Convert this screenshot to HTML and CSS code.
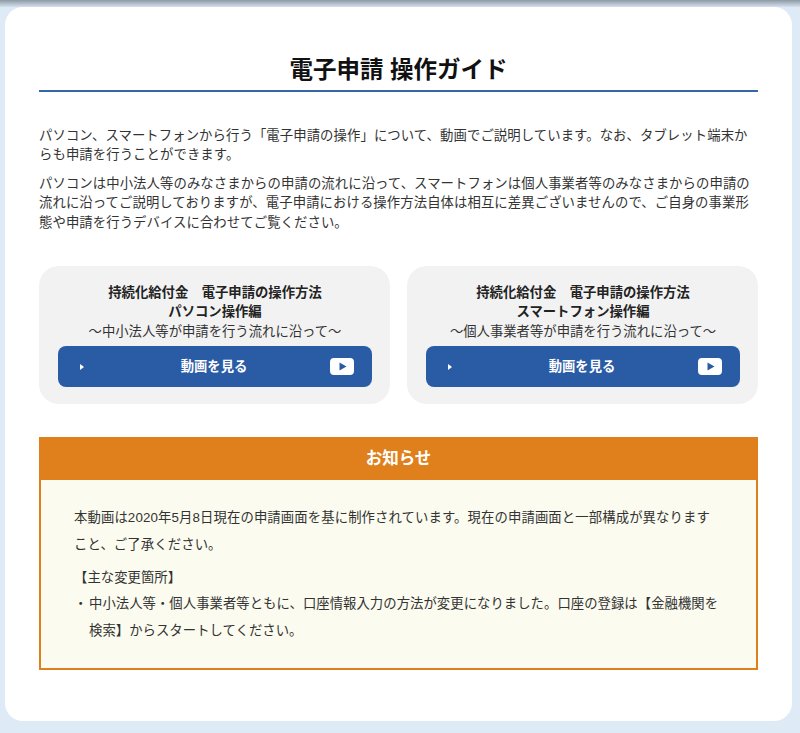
FILE: index.html
```html
<!DOCTYPE html>
<html>
<head lang="ja">
    <meta charset="UTF-8">
    <title>電子申請 操作ガイド</title>
    <link rel="stylesheet" href="styles.css">
</head>
<body>
<div class="topShadow"></div>
<div class="wrap">
    <h1 class="title">電子申請 操作ガイド</h1>
    <div class="lead">
        <p>パソコン、スマートフォンから行う「電子申請の操作」について、動画でご説明しています。なお、タブレット端末からも申請を行うことができます。</p>
        <p>パソコンは中小法人等のみなさまからの申請の流れに沿って、スマートフォンは個人事業者等のみなさまからの申請の流れに沿ってご説明しておりますが、電子申請における操作方法自体は相互に差異ございませんので、ご自身の事業形態や申請を行うデバイスに合わせてご覧ください。</p>
    </div>
    <div class="movies">
        <div class="movie">
            <p class="movieName">持続化給付金　電子申請の操作方法</p>
            <p class="movieName">パソコン操作編</p>
            <p class="movieSub">～中小法人等が申請を行う流れに沿って～</p>
            <a class="movieBtn" href="#">
                <svg class="arrow" viewBox="0 0 4 6"><path d="M0 0L4 3L0 6Z"/></svg>
                <span class="btnText">動画を見る</span>
                <svg class="play" viewBox="0 0 24 17"><path fill-rule="evenodd" d="M4 0H20Q24 0 24 4V13Q24 17 20 17H4Q0 17 0 13V4Q0 0 4 0ZM9.500 4.500V12.500L16.500 8.500Z"/></svg>
            </a>
        </div>
        <div class="movie">
            <p class="movieName">持続化給付金　電子申請の操作方法</p>
            <p class="movieName">スマートフォン操作編</p>
            <p class="movieSub">～個人事業者等が申請を行う流れに沿って～</p>
            <a class="movieBtn" href="#">
                <svg class="arrow" viewBox="0 0 4 6"><path d="M0 0L4 3L0 6Z"/></svg>
                <span class="btnText">動画を見る</span>
                <svg class="play" viewBox="0 0 24 17"><path fill-rule="evenodd" d="M4 0H20Q24 0 24 4V13Q24 17 20 17H4Q0 17 0 13V4Q0 0 4 0ZM9.500 4.500V12.500L16.500 8.500Z"/></svg>
            </a>
        </div>
    </div>
    <div class="notice">
        <h2 class="noticeTitle">お知らせ</h2>
        <div class="noticeBody">
            <p class="noticeText">本動画は2020年5月8日現在の申請画面を基に制作されています。現在の申請画面と一部構成が異なりますこと、ご了承ください。</p>
            <p class="changes">【主な変更箇所】</p>
            <div class="changeItem">
                <span class="mark">・</span>
                <p>中小法人等・個人事業者等ともに、口座情報入力の方法が変更になりました。口座の登録は【金融機関を検索】からスタートしてください。</p>
            </div>
        </div>
    </div>
</div>
</body>
</html>
```

FILE: styles.css
```css
* {
    margin: 0;
    padding: 0;
    box-sizing: border-box;
}

html,
body {
    height: 733px;
    overflow: hidden;
}

body {
    background: #deebf7;
    color: #333;
    font-family: "Liberation Sans", "Noto Sans CJK JP", sans-serif;
    font-size: 13.35px;
    line-height: 19.4px;
}

.topShadow {
    height: 7px;
    background: linear-gradient(#8d9aa5, #d5e2ee);
}

.wrap {
    width: 787px;
    height: 714px;
    margin-left: 5px;
    padding: 0 34px;
    background: #fff;
    border-radius: 18px;
}

.title {
    height: 85px;
    padding-top: 47px;
    border-bottom: 2px solid #3566a8;
    color: #111;
    font-size: 23.5px;
    line-height: 32px;
    text-align: center;
}

.lead {
    padding-top: 34px;
    letter-spacing: .1px;
}

.lead p + p {
    margin-top: 9px;
}

.movies {
    display: flex;
    gap: 17px;
    margin-top: 34px;
}

.movie {
    flex: 1;
    height: 138px;
    padding: 17px 18px 0 19px;
    background: #f2f2f2;
    border-radius: 20px;
    text-align: center;
}

.movieName {
    color: #222;
    font-weight: bold;
}

.movieSub {
    margin-bottom: 5px;
}

.movieBtn {
    display: flex;
    align-items: center;
    height: 41px;
    padding: 0 18px 0 22px;
    background: #2a5ca6;
    border-radius: 8px;
    color: #fff;
    font-weight: bold;
    text-decoration: none;
}

.btnText {
    flex: 1;
    padding-left: 14px;
}

.arrow {
    width: 4px;
    height: 6px;
    fill: #fff;
}

.play {
    width: 24px;
    height: 17px;
    fill: #fff;
}

.notice {
    margin-top: 33px;
    height: 233px;
    background: #fbfbef;
    border: 2px solid #e0801c;
}

.noticeTitle {
    height: 43px;
    margin: -2px -2px 0;
    background: #e0801c;
    color: #fff;
    font-size: 16.5px;
    line-height: 43px;
    text-align: center;
}

.noticeBody {
    padding: 25px 33px 0;
    line-height: 26.5px;
    letter-spacing: .05px;
}

.noticeText {
    letter-spacing: .12px;
}

.changes {
    margin-top: 6.500px;
}

.changeItem {
    display: flex;
}

.mark {
    flex: none;
    width: 15px;
}
```
